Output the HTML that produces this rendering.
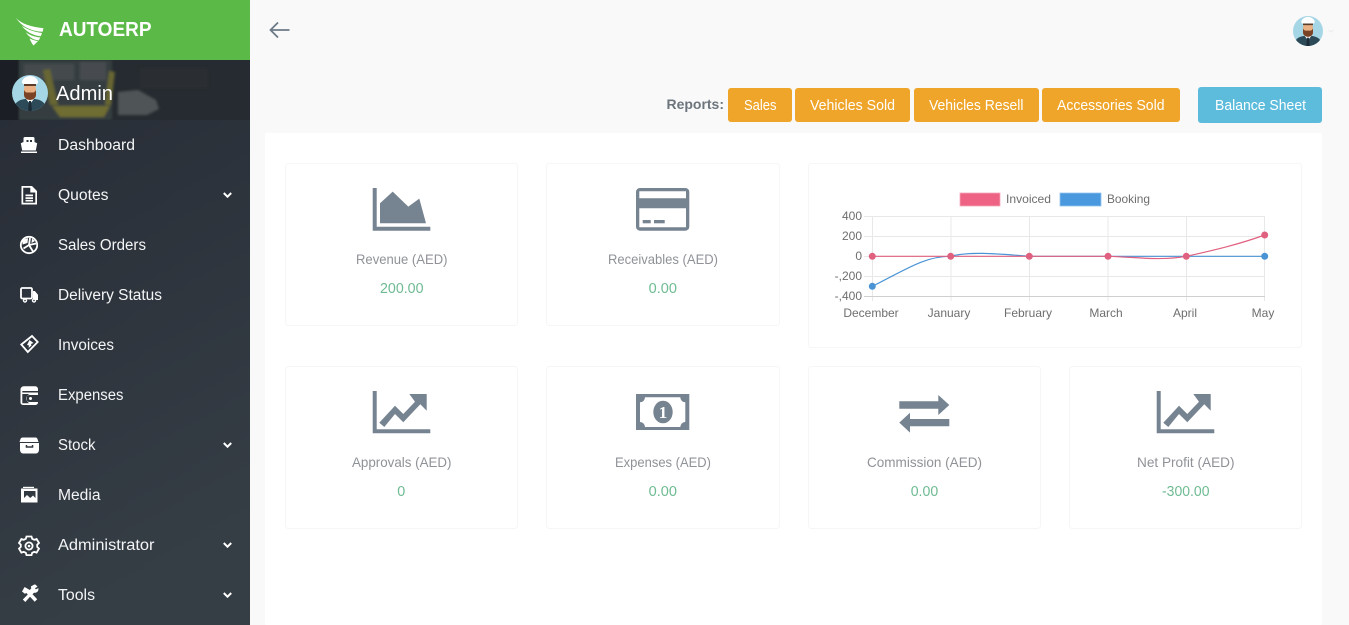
<!DOCTYPE html>
<html lang="en">
<head>
<meta charset="utf-8">
<title>AutoERP</title>
<style>
html,body{margin:0;padding:0;width:1349px;height:625px;overflow:hidden;background:#f9f9f9}
svg{position:absolute;left:0;top:0;display:block}
text{font-family:"Liberation Sans",sans-serif}
.nav{fill:#f4f5f6;font-size:15.5px}
.lbl{fill:#8f9297;font-size:14px}
.val{fill:#6fbb93;font-size:14.5px}
.btn{fill:#fff;font-size:14.5px}
.tick{fill:#6e6e6e;font-size:12px}
.ic{fill:#768391}
.w{fill:#fff}
.wl{fill:none;stroke:#fff;stroke-width:1.8}
.card{fill:#fff;stroke:#f6f6f6;stroke-width:1}
</style>
</head>
<body>
<svg width="1349" height="625" viewBox="0 0 1349 625" xmlns="http://www.w3.org/2000/svg">
<defs>
<linearGradient id="side" x1="0" y1="0" x2="0.25" y2="1">
<stop offset="0" stop-color="#272c35"/><stop offset="1" stop-color="#353d45"/>
</linearGradient>
<filter id="bl" x="-20%" y="-20%" width="140%" height="140%"><feGaussianBlur stdDeviation="1.2"/></filter>
<clipPath id="band"><rect x="0" y="60" width="250" height="60"/></clipPath>
<clipPath id="av"><circle cx="30" cy="30" r="18"/></clipPath>
<g id="avatar">
<circle cx="30" cy="30" r="18" fill="#a5d6e6"/>
<g clip-path="url(#av)">
<path d="M13 48c1-8 5-11 12-12h10c7 1 11 4 12 12z" fill="#2c4a58"/>
<path d="M26 36h8l-4 5z" fill="#fff"/>
<path d="M29 38h2l1 10h-4z" fill="#1d2b36"/>
<rect x="24" y="21" width="12" height="14" rx="5" fill="#eab184"/>
<path d="M24 27c1 2 2 2.500 3 2.500h6c1 0 2-.5 3-2.500v5c0 3-3 5-6 5s-6-2-6-5z" fill="#7b4326"/>
<path d="M22 20c-.5-4 4-7 8-7s8.500 3 8 7l-2.500 2h-11z" fill="#fff"/>
<rect x="24" y="21" width="12" height="2" fill="#5a3c28"/>
</g>
</g>
<path id="trend" class="ic" d="M372.700 391h4v38.300h53.600v4h-57.600zM379.300 422.700L395 405.700 403.300 414 415 401.700 409.300 394H426.700V410.700L420.300 404.300 403.300 422.300 395 414 384.300 427z"/>
</defs>

<!-- Main panel -->
<rect x="265" y="133" width="1057" height="492" rx="2" fill="#fff"/>

<!-- Sidebar -->
<rect x="0" y="60" width="250" height="565" fill="url(#side)"/>
<rect x="0" y="0" width="250" height="60" fill="#5bb947"/>

<g clip-path="url(#band)">
<rect x="0" y="60" width="250" height="60" fill="#252b30"/>
<rect x="0" y="60" width="19" height="60" fill="#1b1f25"/>
<g filter="url(#bl)">
<rect x="19" y="60" width="93" height="60" fill="#363c3f"/>
<rect x="24" y="64" width="50" height="16" fill="#454b4e"/>
<rect x="80" y="62" width="26" height="18" fill="#464c50"/>
<path d="M43 70l7-1 8 36h-8z" fill="#676630"/>
<path d="M105 105l4-34 6 1-4 33z" fill="#676630"/>
<path d="M52 106h58l-6 11H60z" fill="#6f6d30"/>
<path d="M118 92l20-2 18 10 3 9-12 6h-29z" fill="#4f5456"/>
<rect x="140" y="68" width="68" height="20" fill="#2a2f33"/>
</g>
</g>

<!-- Logo -->
<g fill="#fff">
<path d="M16 18c5 5.500 15 9 27.500 10.200l-.9 3.600c-10.600-.4-20.600-4.800-26.600-13.800z"/>
<path d="M21.700 25.800c5 3.400 12 6.300 20.300 7.200l-1.200 3.300c-7.600-.6-14.400-4.300-19.100-10.500z"/>
<path d="M25.800 32.200c4 3 9.300 4.800 14.400 5.200l-1.300 3c-5.800-.6-10-3.400-13.100-8.200z"/>
<path d="M29.600 38.400c2.500 1.500 5.600 2.400 8.400 2.700L33.500 45.500c-1.600-2.100-3-4.500-3.900-7.100z"/>
</g>
<text x="59" y="36" font-size="20" font-weight="700" fill="#fff" textLength="92.500" lengthAdjust="spacingAndGlyphs">AUTOERP</text>

<!-- Admin -->
<svg x="0" y="63" width="60" height="60" viewBox="0 0 60 60" style="position:static"><use href="#avatar"/></svg>
<text x="56" y="100" font-size="20" fill="#fff" textLength="57" lengthAdjust="spacingAndGlyphs">Admin</text>

<!-- Nav icons: ship -->
<path class="w" d="M25 137h8a1.500 1.500 0 011.500 1.500V142l2.700 1.200-1.400 7.300H22.200l-1.400-7.300 2.700-1.200v-3.500A1.500 1.500 0 0125 137z"/>
<path d="M26.500 140h2v2h-2zM30 140h2v2h-2z" fill="#2a3038"/>
<path class="w" d="M21 151.500h16v1.500H21z"/>
<!-- quotes -->
<path class="w" fill-rule="evenodd" d="M21.500 186h10.500l5 5v13.500H21.500zM23.200 187.800v15h12.100v-10.300h-5v-4.700z"/>
<path class="w" d="M25.500 194.500h7.500v1.800h-7.500zM25.500 197.300h7.500v1.800h-7.500zM25.500 200h7.500v1.500h-7.500z"/>
<!-- sales orders -->
<circle class="wl" cx="29" cy="245" r="8.200"/>
<path class="wl" d="M29 245l-5.500 3.500M29 245l1-7M29 245l4 6.500M29 245l7-1.500"/>
<path class="w" d="M22.500 240l5.500-2-.5 5-5 1.500zM32 238.500l3 2.500-3.500 2z"/>
<!-- delivery -->
<rect class="wl" x="21" y="288" width="11" height="10.500" rx="1.200"/>
<path class="w" d="M33 291h1.800l3.200 3.800v5.200h-5z"/>
<circle class="w" cx="25" cy="300.500" r="2.200"/><circle class="w" cx="34" cy="300.500" r="2.200"/>
<circle cx="34" cy="300.500" r=".8" fill="#2d333c"/><circle cx="25" cy="300.500" r=".8" fill="#2d333c"/>
<!-- invoices -->
<path class="wl" d="M21.300 344.500l10.700-8.500 5.700 6-9.900 10z"/>
<path class="w" d="M27 345l2.500-5 4 3-2.500 1 .5 1.500-3 2.500 .5-2.500z"/>
<!-- expenses -->
<path class="w" fill-rule="evenodd" d="M20.500 389.500a3.200 3.200 0 013.200-3.200h11.600a2.700 2.700 0 012.700 2.700V391H22.300v1.500H38V395h-8.500a3.500 3.500 0 000 7H38v.5a2.500 2.500 0 01-2.500 2.500H23a2.500 2.500 0 01-2.500-2.500zM22.300 394v9.200H36v-.0h-6.500a5 5 0 010-9.200z"/>
<circle class="w" cx="30.500" cy="398.500" r="1.500"/>
<!-- stock -->
<path class="w" fill-rule="evenodd" d="M23.500 437.500h12c1 0 1.700.6 2 1.500l1 3h-19l1-3c.3-.9 1-1.500 3-1.500zM20 443h19v6.500c0 2.500-1.500 4-3 4H23c-1.500 0-3-1.500-3-4zM25.700 445v2.800h7.600V445h-1.500v1.300h-4.600V445z"/>
<!-- media -->
<path class="w" fill-rule="evenodd" d="M21 488.500h16.500v14H21zM24 491v7l3-3 3.300 3 2.700-2.500 2.500 2.500v-7z"/>
<path class="w" d="M23 486.800h11v1.200H23z"/>
<circle cx="31.500" cy="492.500" r="1.200" fill="#2f353e"/>
<!-- gear -->
<path class="wl" stroke-width="1.500" d="M26.500 536.500h5l.7 2.300 2.100 1 2.300-.8 2.400 4-1.800 1.700v2.200l1.800 1.700-2.400 4-2.300-.8-2.100 1-.7 2.300h-5l-.7-2.300-2.100-1-2.300.8-2.400-4 1.800-1.700v-2.200l-1.800-1.700 2.400-4 2.300.8 2.100-1z"/>
<circle class="wl" stroke-width="1.500" cx="29" cy="546" r="3.600"/>
<circle class="w" cx="29" cy="546" r="1.300"/>
<!-- tools -->
<path class="w" d="M22 591.500l2.600-4.500 5.200 3 1.500-1.800-.5-1.700 3.500-2 1.500.2 1.700 2-2.500 1.400.8 1.300 2.600-1.300c.4 3-1.400 5-4.400 4.600l-1.500 1.600 4.700 5-2.500 2.500-4.700-5-4.700 5.200-2.500-2.500 5-5-1.700-1.600-1.100 1z"/>

<!-- Nav labels -->
<text class="nav" x="58" y="150" textLength="77" lengthAdjust="spacingAndGlyphs">Dashboard</text>
<text class="nav" x="58" y="200" textLength="50.500" lengthAdjust="spacingAndGlyphs">Quotes</text>
<text class="nav" x="58" y="250" textLength="88" lengthAdjust="spacingAndGlyphs">Sales Orders</text>
<text class="nav" x="58" y="300" textLength="104" lengthAdjust="spacingAndGlyphs">Delivery Status</text>
<text class="nav" x="58" y="350" textLength="56" lengthAdjust="spacingAndGlyphs">Invoices</text>
<text class="nav" x="58" y="400" textLength="65.500" lengthAdjust="spacingAndGlyphs">Expenses</text>
<text class="nav" x="58" y="450" textLength="37.500" lengthAdjust="spacingAndGlyphs">Stock</text>
<text class="nav" x="58" y="500" textLength="42.500" lengthAdjust="spacingAndGlyphs">Media</text>
<text class="nav" x="58" y="550" textLength="96.500" lengthAdjust="spacingAndGlyphs">Administrator</text>
<text class="nav" x="58" y="600" textLength="37" lengthAdjust="spacingAndGlyphs">Tools</text>

<!-- Chevrons -->
<g fill="none" stroke="#fff" stroke-width="2">
<path d="M223.800 193l3.700 3.700 3.700-3.700"/>
<path d="M223.800 443l3.700 3.700 3.700-3.700"/>
<path d="M223.800 543l3.700 3.700 3.700-3.700"/>
<path d="M223.800 593l3.700 3.700 3.700-3.700"/>
</g>

<!-- Top bar -->
<path d="M289.500 30H271M278 22.500L270.500 30l7.500 7.500" fill="none" stroke="#6d7a88" stroke-width="1.800"/>
<svg x="1293" y="16" width="30" height="30" viewBox="12 12 36 36" style="position:static"><use href="#avatar"/></svg>
<path d="M1328.500 30l2.500 2 2.500-2" fill="none" stroke="#eee" stroke-width="1.200"/>

<!-- Report buttons -->
<text x="666.500" y="109" font-size="14" font-weight="700" fill="#6c757d" textLength="57.500" lengthAdjust="spacingAndGlyphs">Reports:</text>
<rect x="728" y="88" width="64" height="34" rx="3" fill="#efa52a"/>
<rect x="795" y="88" width="115" height="34" rx="3" fill="#efa52a"/>
<rect x="914" y="88" width="125" height="34" rx="3" fill="#efa52a"/>
<rect x="1042" y="88" width="138" height="34" rx="3" fill="#efa52a"/>
<rect x="1198" y="87" width="124" height="36" rx="3" fill="#5dbcdc"/>
<text class="btn" x="744" y="110" textLength="32.500" lengthAdjust="spacingAndGlyphs">Sales</text>
<text class="btn" x="810" y="110" textLength="85" lengthAdjust="spacingAndGlyphs">Vehicles Sold</text>
<text class="btn" x="929" y="110" textLength="94.500" lengthAdjust="spacingAndGlyphs">Vehicles Resell</text>
<text class="btn" x="1057" y="110" textLength="107.500" lengthAdjust="spacingAndGlyphs">Accessories Sold</text>
<text class="btn" x="1215" y="110" textLength="91" lengthAdjust="spacingAndGlyphs">Balance Sheet</text>

<!-- Cards -->
<rect class="card" x="285.500" y="163.500" width="232" height="162" rx="3"/>
<rect class="card" x="546.500" y="163.500" width="233" height="162" rx="3"/>
<rect class="card" x="808.500" y="163.500" width="493" height="184" rx="3"/>
<rect class="card" x="285.500" y="366.500" width="232" height="162" rx="3"/>
<rect class="card" x="546.500" y="366.500" width="233" height="162" rx="3"/>
<rect class="card" x="808.500" y="366.500" width="232" height="162" rx="3"/>
<rect class="card" x="1069.500" y="366.500" width="232" height="162" rx="3"/>

<!-- Card icons -->
<path class="ic" d="M372.700 188h4v38.700h53.600v4h-57.600zM380 223.300v-20l12.700-11.700 15.600 15 11-8 6.700 24.700z"/>
<path class="ic" d="M640 188h45.300a4 4 0 014 4v34.700a4 4 0 01-4 4H640a4 4 0 01-4-4V192a4 4 0 014-4zM639.300 191.300v7h46.700v-7zM639.300 208.300v19h46.700v-19z" fill-rule="evenodd"/>
<rect class="ic" x="642.700" y="220" width="8" height="3.300"/>
<rect class="ic" x="654" y="220" width="10.700" height="3.300"/>
<use href="#trend"/>
<path class="ic" fill-rule="evenodd" d="M636 394h53.300v36H636zM645 397.300H680.300a5 5 0 005 5v19.700a5 5 0 00-5 5H645a5 5 0 00-5-5V402.300a5 5 0 005-5z"/>
<ellipse class="ic" cx="663" cy="412" rx="9.700" ry="11.300"/>
<text x="663" y="418" font-size="17" font-weight="700" fill="#fff" text-anchor="middle" style="font-family:'Liberation Serif',serif">1</text>
<path class="ic" d="M899.300 401.300h39v-6.300l11 10-11 10v-6.300h-39zM949.300 419v7.300h-39.300v6.300l-10.700-10 10.700-9.900v6.300z"/>
<use href="#trend" x="784"/>

<!-- Card text -->
<text class="lbl" x="356" y="264" textLength="91.500" lengthAdjust="spacingAndGlyphs">Revenue (AED)</text>
<text class="val" x="380" y="293" textLength="43.500" lengthAdjust="spacingAndGlyphs">200.00</text>
<text class="lbl" x="608" y="264" textLength="110" lengthAdjust="spacingAndGlyphs">Receivables (AED)</text>
<text class="val" x="648.700" y="293" textLength="28.300" lengthAdjust="spacingAndGlyphs">0.00</text>
<text class="lbl" x="352" y="467" textLength="99.500" lengthAdjust="spacingAndGlyphs">Approvals (AED)</text>
<text class="val" x="397.300" y="496" textLength="8" lengthAdjust="spacingAndGlyphs">0</text>
<text class="lbl" x="615" y="467" textLength="96" lengthAdjust="spacingAndGlyphs">Expenses (AED)</text>
<text class="val" x="648.700" y="496" textLength="28.300" lengthAdjust="spacingAndGlyphs">0.00</text>
<text class="lbl" x="867" y="467" textLength="115" lengthAdjust="spacingAndGlyphs">Commission (AED)</text>
<text class="val" x="910.700" y="496" textLength="27.500" lengthAdjust="spacingAndGlyphs">0.00</text>
<text class="lbl" x="1137" y="467" textLength="97.500" lengthAdjust="spacingAndGlyphs">Net Profit (AED)</text>
<text class="val" x="1162" y="496" textLength="47.500" lengthAdjust="spacingAndGlyphs">-300.00</text>

<!-- Chart -->
<rect x="960" y="193" width="40" height="13" fill="#ee6283" stroke="#f5a9bb" stroke-width=".8"/>
<text class="tick" x="1006" y="203" textLength="45" lengthAdjust="spacingAndGlyphs">Invoiced</text>
<rect x="1060" y="193" width="41" height="13" fill="#4a98de" stroke="#8fc4ee" stroke-width=".8"/>
<text class="tick" x="1107" y="203" textLength="43" lengthAdjust="spacingAndGlyphs">Booking</text>
<g stroke="#e8e8e8" stroke-width="1" fill="none">
<path d="M864 216.500h401M864 236.500h401M864 256.500h401M864 276.500h401"/>
<path d="M872.500 216v85M951 216v85M1029.500 216v85M1108 216v85M1186.500 216v85M1264.500 216v85"/>
<path d="M864 296.500h401" stroke="#cfcfcf"/>
</g>
<text class="tick" x="862" y="220" text-anchor="end">400</text>
<text class="tick" x="862" y="240" text-anchor="end">200</text>
<text class="tick" x="862" y="260" text-anchor="end">0</text>
<text class="tick" x="862" y="280" text-anchor="end">-,200</text>
<text class="tick" x="862" y="300" text-anchor="end">-,400</text>
<g text-anchor="middle">
<text class="tick" x="871" y="317">December</text>
<text class="tick" x="949" y="317">January</text>
<text class="tick" x="1028" y="317">February</text>
<text class="tick" x="1106" y="317">March</text>
<text class="tick" x="1185" y="317">April</text>
<text class="tick" x="1263" y="317">May</text>
</g>
<path d="M872.300 286.300C905 270 925 256 950.700 256.300C970 251 1000 254 1029.300 256.300L1108 256.300L1186.300 256.300L1264.700 256.300" fill="none" stroke="#4a94d6" stroke-width="1.200"/>
<path d="M872.300 256.300L950.700 256.300L1029.300 256.300L1108 256.300C1135 257 1160 261 1186.300 256.300C1215 250 1240 244 1264.700 235" fill="none" stroke="#e0607f" stroke-width="1.200"/>
<circle cx="872.300" cy="286.300" r="3.500" fill="#4a94d6"/>
<circle cx="1264.700" cy="256.300" r="3.500" fill="#4a94d6"/>
<g fill="#e0607f">
<circle cx="872.300" cy="256.300" r="3.500"/>
<circle cx="950.700" cy="256.300" r="3.500"/>
<circle cx="1029.300" cy="256.300" r="3.500"/>
<circle cx="1108" cy="256.300" r="3.500"/>
<circle cx="1186.300" cy="256.300" r="3.500"/>
<circle cx="1264.700" cy="235" r="3.500"/>
</g>
</svg>
</body>
</html>
